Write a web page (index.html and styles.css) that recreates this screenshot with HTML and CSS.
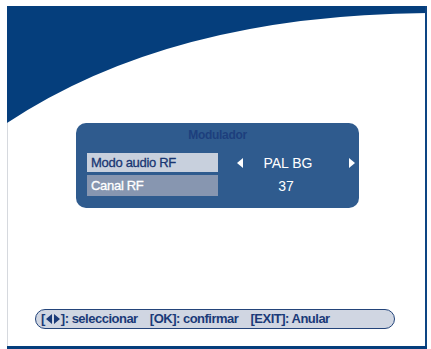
FILE: index.html
```html
<!DOCTYPE html>
<html>
<head>
<meta charset="utf-8">
<link rel="stylesheet" href="styles.css">
</head>
<body>
<div class="screen">
  <svg class="backdrop" width="431" height="349" viewBox="0 0 431 349">
    <path d="M7,6 H427 V13 Q170,15 7,123 Z" fill="#053e7c"/>
    <rect x="7" y="123" width="1" height="223" fill="#d6d9de"/>
    <rect x="425" y="6" width="2" height="342" fill="#0d4583"/>
    <rect x="7" y="346" width="420" height="3" fill="#053e7c"/>
  </svg>
  <div class="panel">
    <div class="title">Modulador</div>
    <div class="rows">
      <div class="row r1">
        <div class="label sel">Modo audio RF</div>
        <div class="value">
          <svg class="arrow" width="6" height="10" viewBox="0 0 6 10"><path d="M6,0 V10 L0,5 Z" fill="#fff"/></svg>
          <span class="val">PAL BG</span>
          <svg class="arrow" width="6" height="10" viewBox="0 0 6 10"><path d="M0,0 V10 L6,5 Z" fill="#fff"/></svg>
        </div>
      </div>
      <div class="row r2">
        <div class="label">Canal RF</div>
        <div class="value">
          <span class="spacer"></span>
          <span class="val">37</span>
          <span class="spacer"></span>
        </div>
      </div>
    </div>
  </div>
  <div class="help"><span class="key">[<svg class="tri" width="14" height="10" viewBox="0 0 14 10"><path d="M6,0 V10 L0,5 Z M8,0 V10 L14,5 Z" fill="#1a3a78"/></svg>]:</span> seleccionar <span class="key gap">[OK]:</span> confirmar <span class="key gap">[EXIT]:</span> Anular</div>
</div>
</body>
</html>
```
FILE: styles.css
```css
html, body {
  margin: 0;
  padding: 0;
  background: #ffffff;
}
.screen {
  position: relative;
  width: 431px;
  height: 349px;
  box-sizing: border-box;
  padding-top: 123px;
  display: flex;
  flex-direction: column;
  align-items: flex-start;
  overflow: hidden;
  font-family: "Liberation Sans", Arial, sans-serif;
}
.backdrop {
  position: absolute;
  left: 0;
  top: 0;
}
.panel {
  position: relative;
  margin-left: 76px;
  width: 283px;
  height: 85px;
  box-sizing: border-box;
  border-radius: 10px;
  background: #2f5b8e;
  padding-top: 4px;
}
.title {
  height: 16px;
  line-height: 16px;
  text-align: center;
  font-size: 12px;
  font-weight: bold;
  letter-spacing: -0.3px;
  color: #1d3f7d;
}
.rows {
  margin-top: 10px;
  padding-left: 11px;
  display: flex;
  flex-direction: column;
  gap: 3px;
}
.row {
  display: flex;
  align-items: center;
}
.r1 { height: 19px; }
.r2 { height: 21px; }
.label {
  width: 131px;
  height: 100%;
  box-sizing: border-box;
  padding-left: 4px;
  display: flex;
  align-items: center;
  font-size: 13px;
  letter-spacing: -0.3px;
  -webkit-text-stroke: 0.3px currentColor;
  color: #ffffff;
  background: #8796b0;
}
.label.sel {
  background: #c8d0dd;
  color: #183672;
}
.value {
  display: flex;
  align-items: center;
  margin-left: 19px;
  font-size: 14px;
  color: #ffffff;
}
.arrow, .spacer {
  display: block;
  width: 6px;
  height: 10px;
}
.val {
  width: 90px;
  text-align: center;
  margin-right: 16px;
}
.r2 .val { margin-left: -2px; }
.help {
  position: relative;
  margin-top: 101px;
  margin-left: 35px;
  width: 360px;
  height: 20px;
  box-sizing: border-box;
  border: 1.3px solid #23447a;
  border-radius: 10px;
  background: #d0d6e2;
  padding-left: 5px;
  line-height: 17px;
  font-size: 13px;
  font-weight: bold;
  letter-spacing: -0.5px;
  color: #1a3a78;
  white-space: pre;
}
.tri {
  display: inline-block;
  vertical-align: -1px;
  margin: 0 1px;
}
.gap { margin-left: 9px; }
```
